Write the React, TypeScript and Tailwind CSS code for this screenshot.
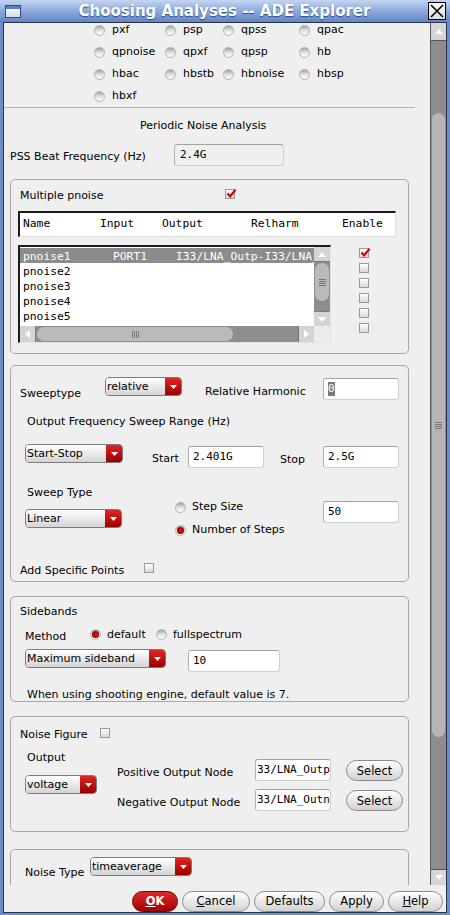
import React from "react";

const ui = "font-['DejaVu_Sans',sans-serif]";
const mono = "font-['DejaVu_Sans_Mono',monospace]";

function Radio({ on = false, className = "" }: { on?: boolean; className?: string }) {
  return (
    <span
      className={`flex h-[11px] w-[11px] shrink-0 items-center justify-center rounded-full border border-[#b2b2b2] bg-linear-to-b from-[#a4a4a4] via-[#e2e2e2] to-white ${className}`}
    >
      {on && <span className="h-[5px] w-[5px] rounded-full bg-[#e00000] shadow-[0_0_0_1px_#8a0000]" />}
    </span>
  );
}

function Check({ on = false, className = "" }: { on?: boolean; className?: string }) {
  return (
    <span
      className={`relative block h-[10px] w-[10px] shrink-0 border border-[#9a9a9a] bg-linear-to-b from-white to-[#d8d8d8] ${className}`}
    >
      {on && (
        <svg className="absolute -top-[2px] left-0" width="11" height="11" viewBox="0 0 11 11">
          <path d="M1.5 5.5 L4.2 8.3 L9.6 1.6" fill="none" stroke="#d40000" strokeWidth="2.2" />
        </svg>
      )}
    </span>
  );
}

function Drop({ text, w, className = "" }: { text: string; w: string; className?: string }) {
  return (
    <div className={`flex h-[19px] shrink-0 overflow-hidden rounded-[4px] border border-[#7c7c7c] ${w} ${className}`}>
      <div className="flex flex-1 items-center bg-linear-to-b from-white to-[#d4d4d4] pl-[1px] text-[11px] text-black">
        {text}
      </div>
      <div className="flex w-[16px] items-center justify-center bg-linear-to-b from-[#e22424] to-[#980000]">
        <svg width="7" height="4" viewBox="0 0 7 4">
          <path d="M0 0H7L3.5 4Z" fill="#fff" />
        </svg>
      </div>
    </div>
  );
}

function Field({
  children,
  w = "w-[76px]",
  className = "",
}: {
  children: React.ReactNode;
  w?: string;
  className?: string;
}) {
  return (
    <div
      className={`flex h-[22px] shrink-0 items-center overflow-hidden whitespace-nowrap rounded-[3px] border border-[#cfcfcf] border-t-[#a2a2a2] border-l-[#b0b0b0] bg-white pl-[4px] text-[11px] text-black ${mono} ${w} ${className}`}
    >
      {children}
    </div>
  );
}

function Frame({ className = "", children }: { className?: string; children?: React.ReactNode }) {
  return (
    <div className={`ml-[6px] w-[399px] rounded-[5px] border border-[#a9a9a9] ${className}`}>{children}</div>
  );
}

function Pill({ children, w, red = false }: { children: React.ReactNode; w: string; red?: boolean }) {
  return (
    <div
      className={`flex h-[21px] items-center justify-center rounded-full border text-[11.5px] ${w} ${
        red
          ? "border-[#6e0000] bg-linear-to-b from-[#de2a2a] to-[#a00000] font-bold text-white"
          : "border-[#8a8a8a] bg-linear-to-b from-white to-[#d2d2d2] text-black"
      }`}
    >
      {children}
    </div>
  );
}

function Tri({ dir }: { dir: "up" | "down" | "left" | "right" }) {
  const d = {
    up: "M0 5H8L4 0Z",
    down: "M0 0H8L4 5Z",
    left: "M5 0V8L0 4Z",
    right: "M0 0V8L5 4Z",
  }[dir];
  const horiz = dir === "up" || dir === "down";
  return (
    <svg width={horiz ? 8 : 5} height={horiz ? 5 : 8} viewBox={horiz ? "0 0 8 5" : "0 0 5 8"}>
      <path d={d} fill="#fff" />
    </svg>
  );
}

function GripH() {
  return (
    <div className="flex flex-col gap-[1px]">
      <div className="h-px w-[7px] bg-[#777]" />
      <div className="h-px w-[7px] bg-[#777]" />
      <div className="h-px w-[7px] bg-[#777]" />
      <div className="h-px w-[7px] bg-[#777]" />
    </div>
  );
}

function GripV() {
  return (
    <div className="flex gap-[1px]">
      <div className="h-[7px] w-px bg-[#777]" />
      <div className="h-[7px] w-px bg-[#777]" />
      <div className="h-[7px] w-px bg-[#777]" />
      <div className="h-[7px] w-px bg-[#777]" />
    </div>
  );
}

const radios = [
  ["pxf", "psp", "qpss", "qpac"],
  ["qpnoise", "qpxf", "qpsp", "hb"],
  ["hbac", "hbstb", "hbnoise", "hbsp"],
  ["hbxf"],
];
const colW = ["w-[71px]", "w-[58px]", "w-[76px]", "w-[70px]"];

const pnoise = [
  { name: "pnoise1", input: "PORT1", output: "I33/LNA_Outp-I33/LNA_", sel: true },
  { name: "pnoise2" },
  { name: "pnoise3" },
  { name: "pnoise4" },
  { name: "pnoise5" },
];

export default function App() {
  return (
    <div className={`flex h-[915px] w-[450px] flex-col bg-[#6c8dc8] ${ui}`}>
      {/* title bar */}
      <div className="flex h-[22px] items-center bg-linear-to-b from-[#c4d5f1] via-[#8eaadc] to-[#6185c4] px-[4px]">
        <div className="ml-[1px] flex h-[13px] w-[16px] flex-col border border-[#33507e]">
          <div className="h-[3px] bg-[#5b7fbf]" />
          <div className="flex-1 bg-linear-to-b from-[#f4f6fa] to-[#d6dce6]" />
        </div>
        <div className="flex-1 text-center text-[15px] font-bold leading-[18px] text-white [text-shadow:0_1px_1px_#2c4a80]">
          Choosing Analyses -- ADE Explorer
        </div>
        <div className="flex h-[18px] w-[18px] items-center justify-center border border-black bg-linear-to-b from-white to-[#dcdcdc]">
          <svg width="14" height="14" viewBox="0 0 14 14">
            <path d="M1 1L13 13M13 1L1 13" stroke="#000" strokeWidth="1.6" />
          </svg>
        </div>
      </div>

      <div className="mx-[3px] mb-[2px] flex flex-1 flex-col border border-[#2b3447] bg-[#efefef]">
        <div className="flex h-[862px]">
          {/* scrolled form */}
          <div className="h-full w-[426px] overflow-hidden text-[11px] leading-[14px] text-black">
            <div className="-mt-[4px] ml-[90px]">
              {radios.map((row, i) => (
                <div key={i} className="flex h-[22px] items-center">
                  {row.map((r, j) => (
                    <div key={r} className={`flex items-center gap-[7px] ${colW[j]}`}>
                      <Radio />
                      <span>{r}</span>
                    </div>
                  ))}
                </div>
              ))}
            </div>
            <div className="h-px w-[411px] bg-[#b4b4b4]" />
            <div className="ml-[136px] mt-[11px]">Periodic Noise Analysis</div>
            <div className="mt-[11px] ml-[6px] flex items-start">
              <span className="mt-[6px] w-[164px]">PSS Beat Frequency (Hz)</span>
              <Field w="w-[110px]" className="!bg-[#efefef] pl-[5px]">
                2.4G
              </Field>
            </div>

            {/* multiple pnoise */}
            <Frame className="mt-[13px] h-[175px]">
              <div className="ml-[9px] mt-[7px] flex h-[14px] items-start">
                <span className="mt-[2px] w-[205px]">Multiple pnoise</span>
                <Check on className="mt-[2px]" />
              </div>
              <div
                className={`ml-[7px] mt-[10px] flex h-[26px] w-[378px] border-t-2 border-l-2 border-r border-b border-t-[#1c1c1c] border-l-[#1c1c1c] border-r-[#dedede] border-b-[#dedede] bg-white pl-[3px] pt-[4px] text-[11.3px] ${mono}`}
              >
                <span className="w-[77px]">Name</span>
                <span className="w-[62px]">Input</span>
                <span className="w-[89px]">Output</span>
                <span className="w-[91px]">Relharm</span>
                <span>Enable</span>
              </div>
              <div className="ml-[7px] mt-[8px] flex items-start">
                <div className="flex h-[98px] w-[313px] flex-col border-t-2 border-l-2 border-r border-b border-t-[#1c1c1c] border-l-[#1c1c1c] border-r-[#e2e2e2] border-b-[#e2e2e2] bg-white">
                  <div className="flex h-[79px]">
                    <div className={`w-[294px] overflow-hidden pt-[1px] text-[11.3px] ${mono}`}>
                      {pnoise.map((p) => (
                        <div
                          key={p.name}
                          className={`flex h-[15px] items-start overflow-hidden whitespace-nowrap pl-[3px] pt-[2px] ${
                            p.sel ? "bg-[#8c8c8c] text-white" : "text-black"
                          }`}
                        >
                          <span className="w-[90px] shrink-0">{p.name}</span>
                          <span className="w-[63px] shrink-0">{p.input}</span>
                          <span className="shrink-0">{p.output}</span>
                        </div>
                      ))}
                    </div>
                    <div className="flex w-[16px] flex-col bg-[#8e8e8e]">
                      <div className="flex h-[15px] items-center justify-center border-b border-[#7a7a7a] bg-[#d4d4d4]">
                        <Tri dir="up" />
                      </div>
                      <div className="mx-[1px] mt-[1px] flex h-[38px] items-center justify-center rounded-full bg-[#bababa]">
                        <GripH />
                      </div>
                      <div className="mt-auto flex h-[15px] items-center justify-center border-t border-[#7a7a7a] bg-[#d4d4d4]">
                        <Tri dir="down" />
                      </div>
                    </div>
                  </div>
                  <div className="flex h-[16px]">
                    <div className="flex w-[294px] bg-[#8e8e8e]">
                      <div className="flex w-[16px] items-center justify-center border-r border-[#7a7a7a] bg-[#d4d4d4]">
                        <Tri dir="left" />
                      </div>
                      <div className="mx-[1px] my-[1px] flex w-[196px] items-center justify-center rounded-full bg-[#bababa]">
                        <GripV />
                      </div>
                      <div className="ml-auto flex w-[16px] items-center justify-center border-l border-[#7a7a7a] bg-[#d4d4d4]">
                        <Tri dir="right" />
                      </div>
                    </div>
                    <div className="w-[16px] bg-[#ececec]" />
                  </div>
                </div>
                <div className="ml-[28px] mt-[3px] flex flex-col gap-[5px]">
                  <Check on />
                  <Check />
                  <Check />
                  <Check />
                  <Check />
                  <Check />
                </div>
              </div>
            </Frame>

            {/* sweep */}
            <Frame className="mt-[11px] h-[217px]">
              <div className="ml-[9px] mt-[11px] flex items-start">
                <span className="mt-[10px] w-[85px]">Sweeptype</span>
                <Drop text="relative" w="w-[77px]" />
                <span className="ml-[23px] mt-[8px] w-[118px]">Relative Harmonic</span>
                <Field className="mt-[1px]">
                  <span className="bg-[#7b7b7b] text-white">0</span>
                </Field>
              </div>
              <div className="ml-[16px] mt-[14px]">Output Frequency Sweep Range (Hz)</div>
              <div className="ml-[14px] mt-[15px] flex items-start">
                <Drop text="Start-Stop" w="w-[98px]" />
                <span className="ml-[29px] mt-[8px] w-[36px]">Start</span>
                <Field className="mt-[2px]">2.401G</Field>
                <span className="ml-[16px] mt-[9px] w-[43px]">Stop</span>
                <Field className="mt-[2px]">2.5G</Field>
              </div>
              <div className="ml-[16px] mt-[18px]">Sweep Type</div>
              <div className="-mt-[2px] ml-[14px] flex items-start">
                <Drop text="Linear" w="w-[97px]" className="mt-[11px]" />
                <div className="ml-[53px] mt-[2px] flex w-[148px] flex-col gap-[9px]">
                  <div className="flex items-center gap-[6px]">
                    <Radio />
                    <span>Step Size</span>
                  </div>
                  <div className="flex items-center gap-[6px]">
                    <Radio on />
                    <span>Number of Steps</span>
                  </div>
                </div>
                <Field className="mt-[3px]">50</Field>
              </div>
              <div className="ml-[9px] mt-[26px] flex items-start">
                <span className="mt-[1px] w-[124px]">Add Specific Points</span>
                <Check />
              </div>
            </Frame>

            {/* sidebands */}
            <Frame className="mt-[14px] h-[106px]">
              <div className="ml-[9px] mt-[8px]">Sidebands</div>
              <div className="ml-[14px] mt-[9px] flex items-start">
                <span className="mt-[2px] w-[65px]">Method</span>
                <Radio on className="mt-[1px]" />
                <span className="ml-[6px] w-[49px]">default</span>
                <Radio className="mt-[1px]" />
                <span className="ml-[6px]">fullspectrum</span>
              </div>
              <div className="ml-[14px] mt-[5px] flex items-start">
                <Drop text="Maximum sideband" w="w-[141px]" />
                <Field w="w-[92px]" className="ml-[22px] mt-[1px]">
                  10
                </Field>
              </div>
              <div className="ml-[16px] mt-[16px]">When using shooting engine, default value is 7.</div>
            </Frame>

            {/* noise figure */}
            <Frame className="mt-[14px] h-[116px]">
              <div className="ml-[9px] mt-[9px] flex h-[14px] items-start">
                <span className="mt-[2px] w-[80px]">Noise Figure</span>
                <Check className="mt-[2px]" />
              </div>
              <div className="ml-[14px] mt-[9px] flex items-start">
                <div className="w-[92px]">
                  <div className="ml-[2px] mt-[2px]">Output</div>
                  <Drop text="voltage" w="w-[72px]" className="mt-[10px]" />
                </div>
                <div className="flex flex-col gap-[8px] pt-[10px]">
                  <div className="flex items-start">
                    <span className="mt-[7px] w-[138px]">Positive Output Node</span>
                    <Field className="pl-0">
                      <span className="-ml-[3px]">33/LNA_Outp</span>
                    </Field>
                    <div className="ml-[15px] mt-[1px]">
                      <Pill w="w-[57px]">Select</Pill>
                    </div>
                  </div>
                  <div className="flex items-start">
                    <span className="mt-[7px] w-[138px]">Negative Output Node</span>
                    <Field className="pl-0">
                      <span className="-ml-[3px]">33/LNA_Outn</span>
                    </Field>
                    <div className="ml-[15px] mt-[1px]">
                      <Pill w="w-[57px]">Select</Pill>
                    </div>
                  </div>
                </div>
              </div>
            </Frame>

            {/* noise type */}
            <Frame className="mt-[17px] h-[60px]">
              <div className="ml-[14px] mt-[7px] flex items-start">
                <span className="mt-[9px] w-[65px]">Noise Type</span>
                <Drop text="timeaverage" w="w-[102px]" />
              </div>
            </Frame>
          </div>

          {/* main scrollbar */}
          <div className="flex w-[16px] flex-col border-l border-[#5a5a5a] bg-[#8d8d8d]">
            <div className="flex h-[18px] items-center justify-center border-b border-[#555] bg-[#d6d6d6]">
              <Tri dir="up" />
            </div>
            <div className="ml-px mr-[1px] mt-[72px] flex h-[624px] items-center justify-center rounded-[7px] bg-[#b6b6b6]">
              <GripH />
            </div>
            <div className="mt-auto flex h-[16px] items-center justify-center border-t border-[#555] bg-[#d6d6d6]">
              <Tri dir="down" />
            </div>
          </div>
        </div>

        {/* buttons */}
        <div className="flex flex-1 items-start justify-end gap-[4px] pr-[3px] pt-[6px]">
          <Pill w="w-[46px]" red>
            <span>
              <u>O</u>K
            </span>
          </Pill>
          <Pill w="w-[68px]">
            <span>
              <u>C</u>ancel
            </span>
          </Pill>
          <Pill w="w-[71px]">Defaults</Pill>
          <Pill w="w-[55px]">Apply</Pill>
          <Pill w="w-[55px]">
            <span>
              <u>H</u>elp
            </span>
          </Pill>
        </div>
      </div>
    </div>
  );
}
